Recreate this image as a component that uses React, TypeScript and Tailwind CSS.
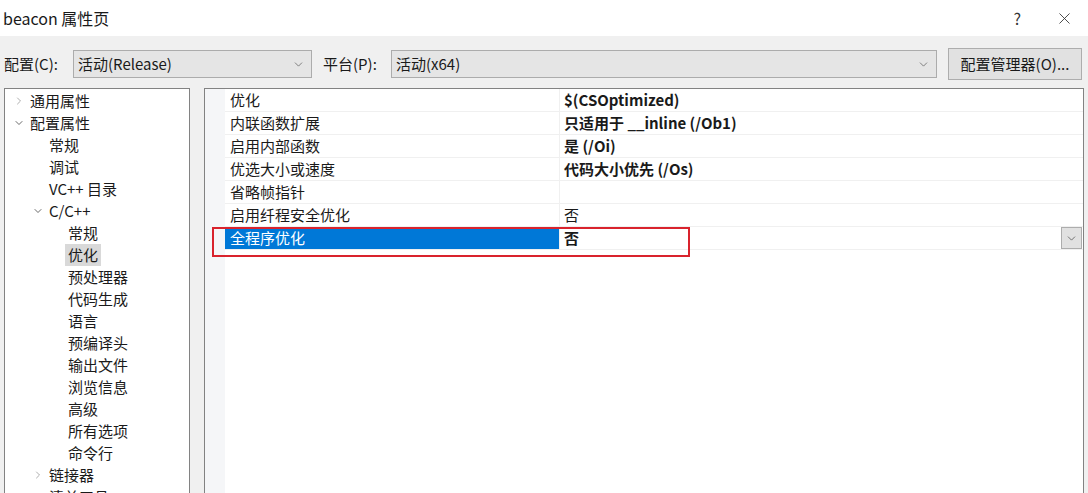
import React from "react";
import { ChevronRight, ChevronDown, X } from "lucide-react";

const FONT = { fontFamily: '"Noto Sans CJK SC", "Noto Sans", "Liberation Sans", sans-serif' };

// tree nodes: level, label, expanded (undefined = leaf), selected
const tree: { lv: number; label: string; open?: boolean; sel?: boolean }[] = [
  { lv: 0, label: "通用属性", open: false },
  { lv: 0, label: "配置属性", open: true },
  { lv: 1, label: "常规" },
  { lv: 1, label: "调试" },
  { lv: 1, label: "VC++ 目录" },
  { lv: 1, label: "C/C++", open: true },
  { lv: 2, label: "常规" },
  { lv: 2, label: "优化", sel: true },
  { lv: 2, label: "预处理器" },
  { lv: 2, label: "代码生成" },
  { lv: 2, label: "语言" },
  { lv: 2, label: "预编译头" },
  { lv: 2, label: "输出文件" },
  { lv: 2, label: "浏览信息" },
  { lv: 2, label: "高级" },
  { lv: 2, label: "所有选项" },
  { lv: 2, label: "命令行" },
  { lv: 1, label: "链接器", open: false },
  { lv: 1, label: "清单工具", open: false },
];

const props: { name: string; value: string; bold?: boolean; sel?: boolean }[] = [
  { name: "优化", value: "$(CSOptimized)", bold: true },
  { name: "内联函数扩展", value: "只适用于 __inline (/Ob1)", bold: true },
  { name: "启用内部函数", value: "是 (/Oi)", bold: true },
  { name: "优选大小或速度", value: "代码大小优先 (/Os)", bold: true },
  { name: "省略帧指针", value: "" },
  { name: "启用纤程安全优化", value: "否" },
  { name: "全程序优化", value: "否", sel: true },
];

function Combo({ text, className }: { text: string; className: string }) {
  return (
    <div className={"h-[28px] flex items-center justify-between bg-[#e5e5e5] border border-[#acacac] pl-[4px] pr-[6px] " + className}>
      <span className="text-[15px] text-[#1a1a1a]">{text}</span>
      <ChevronDown size={13} strokeWidth={1.3} className="text-[#555]" />
    </div>
  );
}

export default function App() {
  return (
    <div style={FONT} className="w-[1088px] h-[493px] overflow-hidden bg-[#f0f0f0] text-[#1a1a1a]">
      {/* title bar */}
      <div className="h-[36px] bg-white flex items-center justify-between pl-[3px] pr-[14px]">
        <span className="text-[16px]">beacon 属性页</span>
        <div className="flex items-center gap-[34px]">
          <span className="text-[16px] text-[#333]">?</span>
          <X size={19} strokeWidth={1.1} className="text-[#333]" />
        </div>
      </div>

      {/* config row */}
      <div className="h-[52px] flex items-center pt-[4px] pl-[4px] pr-[5px]">
        <span className="text-[15px] w-[69px]">配置(C):</span>
        <Combo text="活动(Release)" className="w-[239px]" />
        <span className="text-[15px] ml-[11px] w-[68px]">平台(P):</span>
        <Combo text="活动(x64)" className="w-[546px]" />
        <div className="ml-[11px] w-[134px] h-[32px] flex items-center justify-center bg-[#e1e1e1] border border-[#adadad] text-[15px]">
          配置管理器(O)...
        </div>
      </div>

      {/* panels */}
      <div className="flex pl-[4px] h-[405px]">
        <div className="w-[186px] h-[420px] bg-white border border-[#828282] pt-[1px] overflow-hidden">
          {tree.map((n, i) => (
            <div key={i} className="h-[22px] flex items-center" style={{ paddingLeft: 8 + n.lv * 19 }}>
              <span className="w-[17px] flex items-center justify-start">
                {n.open === true && <ChevronDown size={12} strokeWidth={1.6} className="text-[#444]" />}
                {n.open === false && <ChevronRight size={12} strokeWidth={1.6} className="text-[#999]" />}
              </span>
              <span className={"text-[15px] px-[3px] -ml-[3px] leading-[22px] " + (n.sel ? "bg-[#d9d9d9]" : "")}>{n.label}</span>
            </div>
          ))}
        </div>

        <div className="ml-[14px] w-[880px] h-[420px] bg-white border border-[#828282] relative">
          <div className="flex h-full">
            <div className="w-[20px] bg-[#f5f6f8]" />
            <div className="flex-1">
              {props.map((p, i) => (
                <div key={i} className="h-[23px] flex border-b border-[#f0f0f0]">
                  <div className={"w-[334px] flex items-center pl-[5px] text-[15px] " + (p.sel ? "bg-[#0078d7] text-white" : "")}>{p.name}</div>
                  <div className="flex-1 flex items-center justify-between border-l border-[#f0f0f0] pl-[4px] pr-[1px]">
                    <span className={"text-[15px] " + (p.bold || p.sel ? "font-bold" : "")}>{p.value}</span>
                    {p.sel && (
                      <div className="w-[21px] h-[22px] bg-[#e1e1e1] border border-[#adadad] flex items-center justify-center">
                        <ChevronDown size={13} strokeWidth={1.3} className="text-[#444]" />
                      </div>
                    )}
                  </div>
                </div>
              ))}
            </div>
          </div>
          {/* annotation box */}
          <div className="absolute left-[7px] top-[138px] w-[478px] h-[30px] border-2 border-[#d9232d] pointer-events-none" />
        </div>
      </div>
    </div>
  );
}
